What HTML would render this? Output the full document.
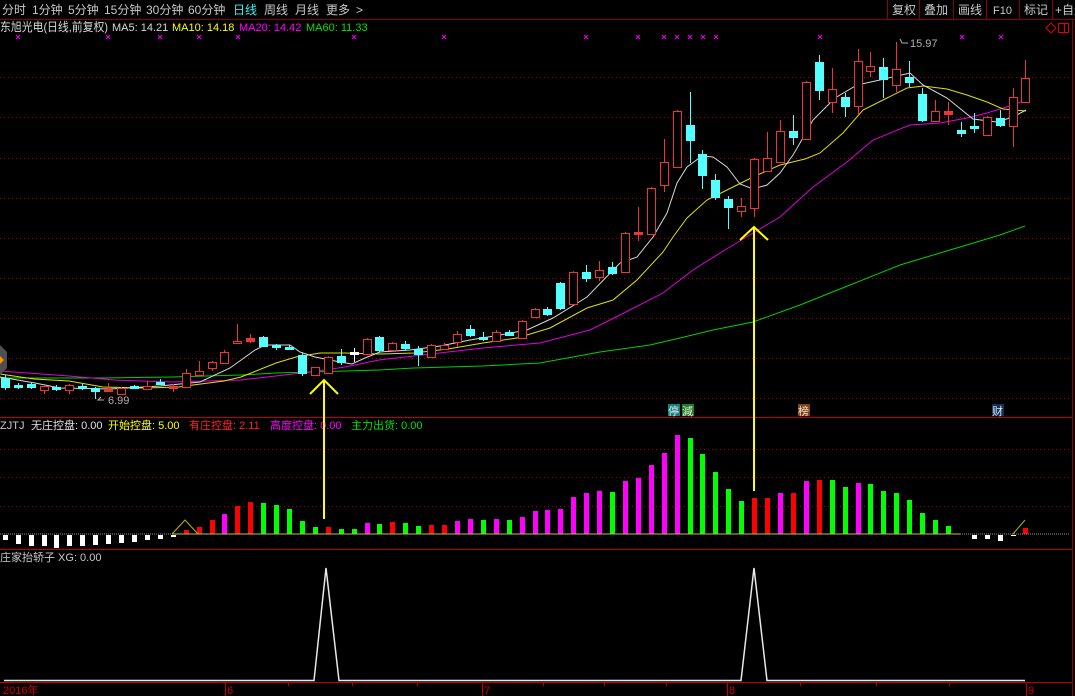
<!DOCTYPE html>
<html><head><meta charset="utf-8"><style>
html,body{margin:0;padding:0;background:#000;width:1075px;height:696px;overflow:hidden}
svg{display:block}
text{font-family:"Liberation Sans","Noto Sans CJK SC",sans-serif;font-size:12px}
</style></head><body>
<svg id="s" width="1075" height="696" viewBox="0 0 1075 696" xmlns="http://www.w3.org/2000/svg">
<rect width="1075" height="696" fill="#000"/>
<line x1="0" y1="19.5" x2="1075" y2="19.5" stroke="#8c0000"/>
<g fill="#c8c8c8">
<text x="2" y="14">分时</text><text x="32" y="14">1分钟</text><text x="68" y="14">5分钟</text><text x="104" y="14">15分钟</text><text x="146" y="14">30分钟</text><text x="188" y="14">60分钟</text>
<text x="233" y="14" fill="#3cf0f0">日线</text><text x="264" y="14">周线</text><text x="295" y="14">月线</text><text x="326" y="14">更多</text><text x="356" y="14">&gt;</text>
</g>
<g stroke="#8c0000" fill="none"><line x1="887.5" y1="0" x2="887.5" y2="19"/><line x1="919.5" y1="0" x2="919.5" y2="19"/><line x1="953.5" y1="0" x2="953.5" y2="19"/><line x1="986.5" y1="0" x2="986.5" y2="19"/><line x1="1019.5" y1="0" x2="1019.5" y2="19"/><line x1="1052.5" y1="0" x2="1052.5" y2="19"/></g>
<g fill="#c8c8c8"><text x="892" y="14">复权</text><text x="924" y="14">叠加</text><text x="958" y="14">画线</text><text x="993" y="14" style="font-size:11px">F10</text><text x="1024" y="14">标记</text><text x="1055" y="14">+自选</text></g>
<text x="0" y="31" fill="#d8d8d8" textLength="108" lengthAdjust="spacingAndGlyphs">东旭光电(日线,前复权)</text>
<text x="112" y="31" fill="#d8d8d8" style="font-size:11px">MA5: 14.21</text>
<text x="172" y="31" fill="#ffff00" style="font-size:11px">MA10: 14.18</text>
<text x="239" y="31" fill="#ff00ff" style="font-size:11px">MA20: 14.42</text>
<text x="306" y="31" fill="#00e000" style="font-size:11px">MA60: 11.33</text>
<path d="M1051 23l5 5-5 5-5-5z" fill="none" stroke="#e00000"/>
<rect x="1058.5" y="23.5" width="10" height="9" fill="none" stroke="#e00000"/><line x1="1064.5" y1="23" x2="1064.5" y2="33" stroke="#e00000"/>
<line x1="1072.5" y1="19" x2="1072.5" y2="696" stroke="#8c0000"/>
<g stroke="#a00000" stroke-dasharray="1 3">
<line x1="0" y1="77.5" x2="1070" y2="77.5"/><line x1="0" y1="117.5" x2="1070" y2="117.5"/><line x1="0" y1="158.5" x2="1070" y2="158.5"/><line x1="0" y1="198.5" x2="1070" y2="198.5"/><line x1="0" y1="238.5" x2="1070" y2="238.5"/><line x1="0" y1="278.5" x2="1070" y2="278.5"/><line x1="0" y1="318.5" x2="1070" y2="318.5"/><line x1="0" y1="358.5" x2="1070" y2="358.5"/><line x1="0" y1="398.5" x2="1070" y2="398.5"/>
<line x1="0" y1="449.5" x2="1070" y2="449.5"/><line x1="0" y1="477.5" x2="1070" y2="477.5"/><line x1="0" y1="506.5" x2="1070" y2="506.5"/>
</g>
<line x1="0" y1="417.5" x2="1072" y2="417.5" stroke="#c00000"/>
<line x1="0" y1="549.5" x2="1072" y2="549.5" stroke="#c00000"/>
<line x1="0" y1="682.5" x2="1072" y2="682.5" stroke="#c00000"/>
<polyline fill="none" stroke="#00d000" points="0,378 103,378 172,377 241,375 276,373 345,371 379,370 414,368 448,367 483,366 540,363 600,352 650,345 680,338 713,330 753,322 800,305 850,285 900,265 950,250 1000,235 1025,226"/>
<polyline fill="none" stroke="#e000e0" points="0,371 69,376 114,380 172,382 241,380 310,372 345,367 379,360 414,356 448,352 483,348 540,343 590,330 620,315 663,293 693,270 720,253 753,233 780,217 813,187 847,162 873,140 910,125 940,123 967,118 987,113 1013,105 1026,100"/>
<polyline fill="none" stroke="#e0e000" points="0,374 34,379 69,381 103,387 145,388 179,387 193,385 224,381 241,377 276,363 296,357 320,353 345,353 379,354 414,353 448,349 483,343 517,338 550,328 587,308 613,300 637,280 663,252 673,237 687,218 707,200 727,190 753,177 780,165 805,159 820,153 843,133 863,110 887,98 907,88 923,86 947,89 967,95 987,102 1003,109 1026,111"/>
<polyline fill="none" stroke="#d8d8d8" points="0,377 35,383 60,388 110,389 160,386 200,382 230,368 255,350 265,345 290,345 300,352 315,357 340,362 352,364 365,358 380,352 410,350 440,346 470,340 500,335 527,330 553,318 587,297 620,263 637,257 653,237 667,213 677,183 687,167 702,156 713,157 727,167 740,184 753,189 767,185 780,173 793,155 800,143 813,120 835,98 857,85 880,80 897,76 910,73 923,85 947,98 973,119 997,122 1013,117 1026,110"/>
<g id="cand"></g>
<g id="bars"></g>
<g id="mk" stroke="#e000e0" stroke-width="1.2"></g>
<text x="108" y="404" fill="#b0b0b0" style="font-size:11px">6.99</text>
<path d="M104 400h-6l3-3" fill="none" stroke="#b0b0b0"/>
<text x="910" y="47" fill="#b0b0b0" style="font-size:11px">15.97</text>
<path d="M908 43h-6l-2-4" fill="none" stroke="#b0b0b0"/>
<path d="M0 345l7 7v16l-7 7z" fill="#505050"/><path d="M0 356l4 4-4 4z" fill="#ff9000"/>
<rect x="668" y="404" width="12" height="12" fill="#108080"/><text x="668" y="415" fill="#e8e8e8" style="font-size:11px">停</text>
<rect x="682" y="404" width="12" height="12" fill="#208020"/><text x="682" y="415" fill="#e8e8e8" style="font-size:11px">減</text>
<rect x="798" y="404" width="12" height="12" fill="#804010"/><text x="798" y="415" fill="#e8e8e8" style="font-size:11px">榜</text>
<rect x="992" y="404" width="12" height="12" fill="#103060"/><text x="992" y="415" fill="#e8e8e8" style="font-size:11px">财</text>
<text x="0" y="429" fill="#c8c8c8" style="font-size:11px">ZJTJ</text>
<text x="31" y="429" fill="#e0e0e0" style="font-size:11px">无庄控盘: 0.00</text>
<text x="108" y="429" fill="#ffff00" style="font-size:11px">开始控盘: 5.00</text>
<text x="189" y="429" fill="#ff2020" style="font-size:11px">有庄控盘: 2.11</text>
<text x="270" y="429" fill="#ff00ff" style="font-size:11px">高度控盘: 0.00</text>
<text x="351" y="429" fill="#00e000" style="font-size:11px">主力出货: 0.00</text>
<text x="0" y="561" fill="#c8c8c8" style="font-size:11px">庄家抬轿子 XG: 0.00</text>
<line x1="0" y1="534" x2="172" y2="534" stroke="#909090" stroke-dasharray="1 1"/>
<line x1="172" y1="534" x2="960" y2="534" stroke="#c0c040"/>
<line x1="960" y1="534" x2="1070" y2="534" stroke="#909090" stroke-dasharray="1 1"/>
<polyline fill="none" stroke="#c0b000" points="172,534 185,520 198,534"/>
<polyline fill="none" stroke="#c0b000" points="1013,534 1025,520"/>
<polyline fill="none" stroke="#e8e8e8" stroke-width="1.5" points="4,680.5 314,680.5 326,568 339,680.5 741,680.5 754,568 767,680.5 1025,680.5"/>
<g stroke="#ffff00" stroke-width="2" fill="none">
<line x1="324" y1="380" x2="324" y2="519"/><polyline points="310,394 324,380 338,394"/>
<line x1="754" y1="227" x2="754" y2="491"/><polyline points="740,240 754,227 768,240"/>
</g>
<g stroke="#c00000"><line x1="225.5" y1="682" x2="225.5" y2="696"/><line x1="482.5" y1="682" x2="482.5" y2="696"/><line x1="727.5" y1="682" x2="727.5" y2="696"/><line x1="1026.5" y1="682" x2="1026.5" y2="696"/>
<line x1="288.5" y1="682" x2="288.5" y2="686"/><line x1="352.5" y1="682" x2="352.5" y2="686"/><line x1="417.5" y1="682" x2="417.5" y2="686"/><line x1="543.5" y1="682" x2="543.5" y2="686"/><line x1="604.5" y1="682" x2="604.5" y2="686"/><line x1="666.5" y1="682" x2="666.5" y2="686"/><line x1="800.5" y1="682" x2="800.5" y2="686"/><line x1="876.5" y1="682" x2="876.5" y2="686"/><line x1="949.5" y1="682" x2="949.5" y2="686"/></g>
<g fill="#d00000"><text x="3" y="694" style="font-size:11px">2016年</text><text x="227" y="694" style="font-size:11px">6</text><text x="484" y="694" style="font-size:11px">7</text><text x="729" y="694" style="font-size:11px">8</text><text x="1028" y="694" style="font-size:11px">9</text></g>
</svg>
<script>
var NS="http://www.w3.org/2000/svg";
function el(p,t,a){var e=document.createElementNS(NS,t);for(var k in a)e.setAttribute(k,a[k]);p.appendChild(e);}
function X(i){return 4.8+12.92*i;}
var C=[[378,387,375,390,'c'],[385,387,383,389,'c'],[384,387,382,389,'c'],[386,390,385,394,'r'],[387,389,385,391,'c'],[385,390,384,394,'r'],[386,388,384,390,'c'],[388,391,387,399,'c'],[389,391,383,392,'f'],[388,394,387,395,'r'],[386,388,385,389,'c'],[386,389,381,390,'r'],[382,384,379,385,'c'],[386,388,384,392,'f'],[373,387,369,388,'r'],[371,375,361,376,'r'],[362,368,361,371,'r'],[352,363,350,364,'r'],[341,343,324,343,'r'],[338,341,334,343,'f'],[337,346,336,347,'c'],[345,347,344,350,'c'],[347,349,345,350,'c'],[355,373,353,376,'c'],[367,375,367,376,'r'],[357,373,356,374,'r'],[356,362,349,365,'c'],[352,354,348,362,'w'],[339,354,338,355,'r'],[337,350,336,352,'c'],[343,350,342,351,'r'],[344,348,341,351,'c'],[349,354,346,366,'c'],[345,357,344,358,'r'],[345,349,343,350,'r'],[334,342,331,347,'r'],[329,335,325,337,'c'],[337,339,332,341,'c'],[332,341,330,342,'r'],[332,335,330,336,'c'],[321,338,320,339,'r'],[309,317,308,318,'r'],[309,314,307,316,'c'],[283,308,282,310,'c'],[272,304,271,305,'r'],[272,278,265,282,'c'],[270,277,261,281,'r'],[267,273,262,275,'c'],[233,272,232,273,'r'],[232,234,207,241,'f'],[188,234,187,235,'r'],[162,185,139,192,'r'],[111,167,110,168,'r'],[125,140,92,163,'c'],[154,175,150,189,'c'],[180,197,174,200,'c'],[199,207,196,229,'c'],[206,211,198,217,'r'],[159,208,158,217,'r'],[158,171,132,172,'r'],[131,162,120,163,'r'],[131,137,115,145,'c'],[82,139,81,140,'r'],[62,90,55,100,'c'],[89,102,68,113,'r'],[97,106,93,117,'c'],[61,106,49,115,'r'],[66,71,52,77,'r'],[67,79,58,98,'c'],[69,85,42,92,'r'],[77,82,61,87,'c'],[94,120,88,122,'c'],[111,121,100,122,'r'],[111,114,102,125,'f'],[130,133,122,137,'c'],[126,128,113,133,'c'],[117,135,116,136,'r'],[118,125,110,127,'c'],[97,126,88,147,'r'],[78,102,60,103,'r']];
var g=document.getElementById('cand');
C.forEach(function(c,i){var x=Math.round(X(i))+0.5;var col=c[4]=='c'?'#54ffff':(c[4]=='w'?'#ffffff':'#ee3535');
el(g,'line',{x1:x,y1:c[2],x2:x,y2:c[3],stroke:col});
var h=Math.max(1,c[1]-c[0]);
if(c[4]=='r')el(g,'rect',{x:x-4,y:c[0]+0.5,width:8,height:h,fill:'#000',stroke:col});
else el(g,'rect',{x:x-4.5,y:c[0],width:9,height:h+1,fill:col});});
var B=[[540,'w'],[544,'w'],[546,'w'],[546,'w'],[548,'w'],[546,'w'],[546,'w'],[545,'w'],[544,'w'],[543,'w'],[542,'w'],[540,'w'],[539,'w'],[537,'w'],[530,'r'],[527,'r'],[520,'r'],[514,'m'],[506,'r'],[502,'r'],[503,'g'],[505,'g'],[509,'g'],[521,'g'],[527,'g'],[527,'r'],[529,'g'],[529,'g'],[523,'m'],[524,'g'],[522,'r'],[523,'g'],[526,'g'],[525,'r'],[525,'r'],[521,'m'],[519,'m'],[520,'g'],[519,'m'],[520,'g'],[517,'m'],[511,'m'],[510,'m'],[509,'m'],[497,'m'],[493,'m'],[491,'m'],[492,'g'],[481,'m'],[478,'m'],[465,'m'],[453,'m'],[435,'m'],[438,'g'],[454,'g'],[472,'g'],[489,'g'],[501,'g'],[498,'r'],[498,'r'],[493,'m'],[493,'r'],[481,'m'],[480,'r'],[480,'g'],[487,'g'],[483,'m'],[484,'g'],[491,'g'],[493,'g'],[500,'g'],[513,'g'],[520,'g'],[526,'g'],[534,'n'],[539,'w'],[539,'w'],[541,'w'],[536,'w'],[528,'r']];
var cols={w:'#ffffff',r:'#ff0000',m:'#ff00ff',g:'#00ff00'};
var b=document.getElementById('bars');
B.forEach(function(v,i){if(v[1]=='n')return;var x=Math.round(X(i))-2;
if(v[1]=='w')el(b,'rect',{x:x,y:535,width:5,height:v[0]-535,fill:'#fff'});
else el(b,'rect',{x:x,y:v[0],width:5,height:534-v[0],fill:cols[v[1]]});});
var M=[18,108,160,199,238,354,444,586,638,664,677,690,703,716,820,962,1001];
var mk=document.getElementById('mk');
M.forEach(function(x){el(mk,'path',{d:'M'+(x-2)+' 35l4 4M'+(x+2)+' 35l-4 4'});});
</script>
</body></html>
